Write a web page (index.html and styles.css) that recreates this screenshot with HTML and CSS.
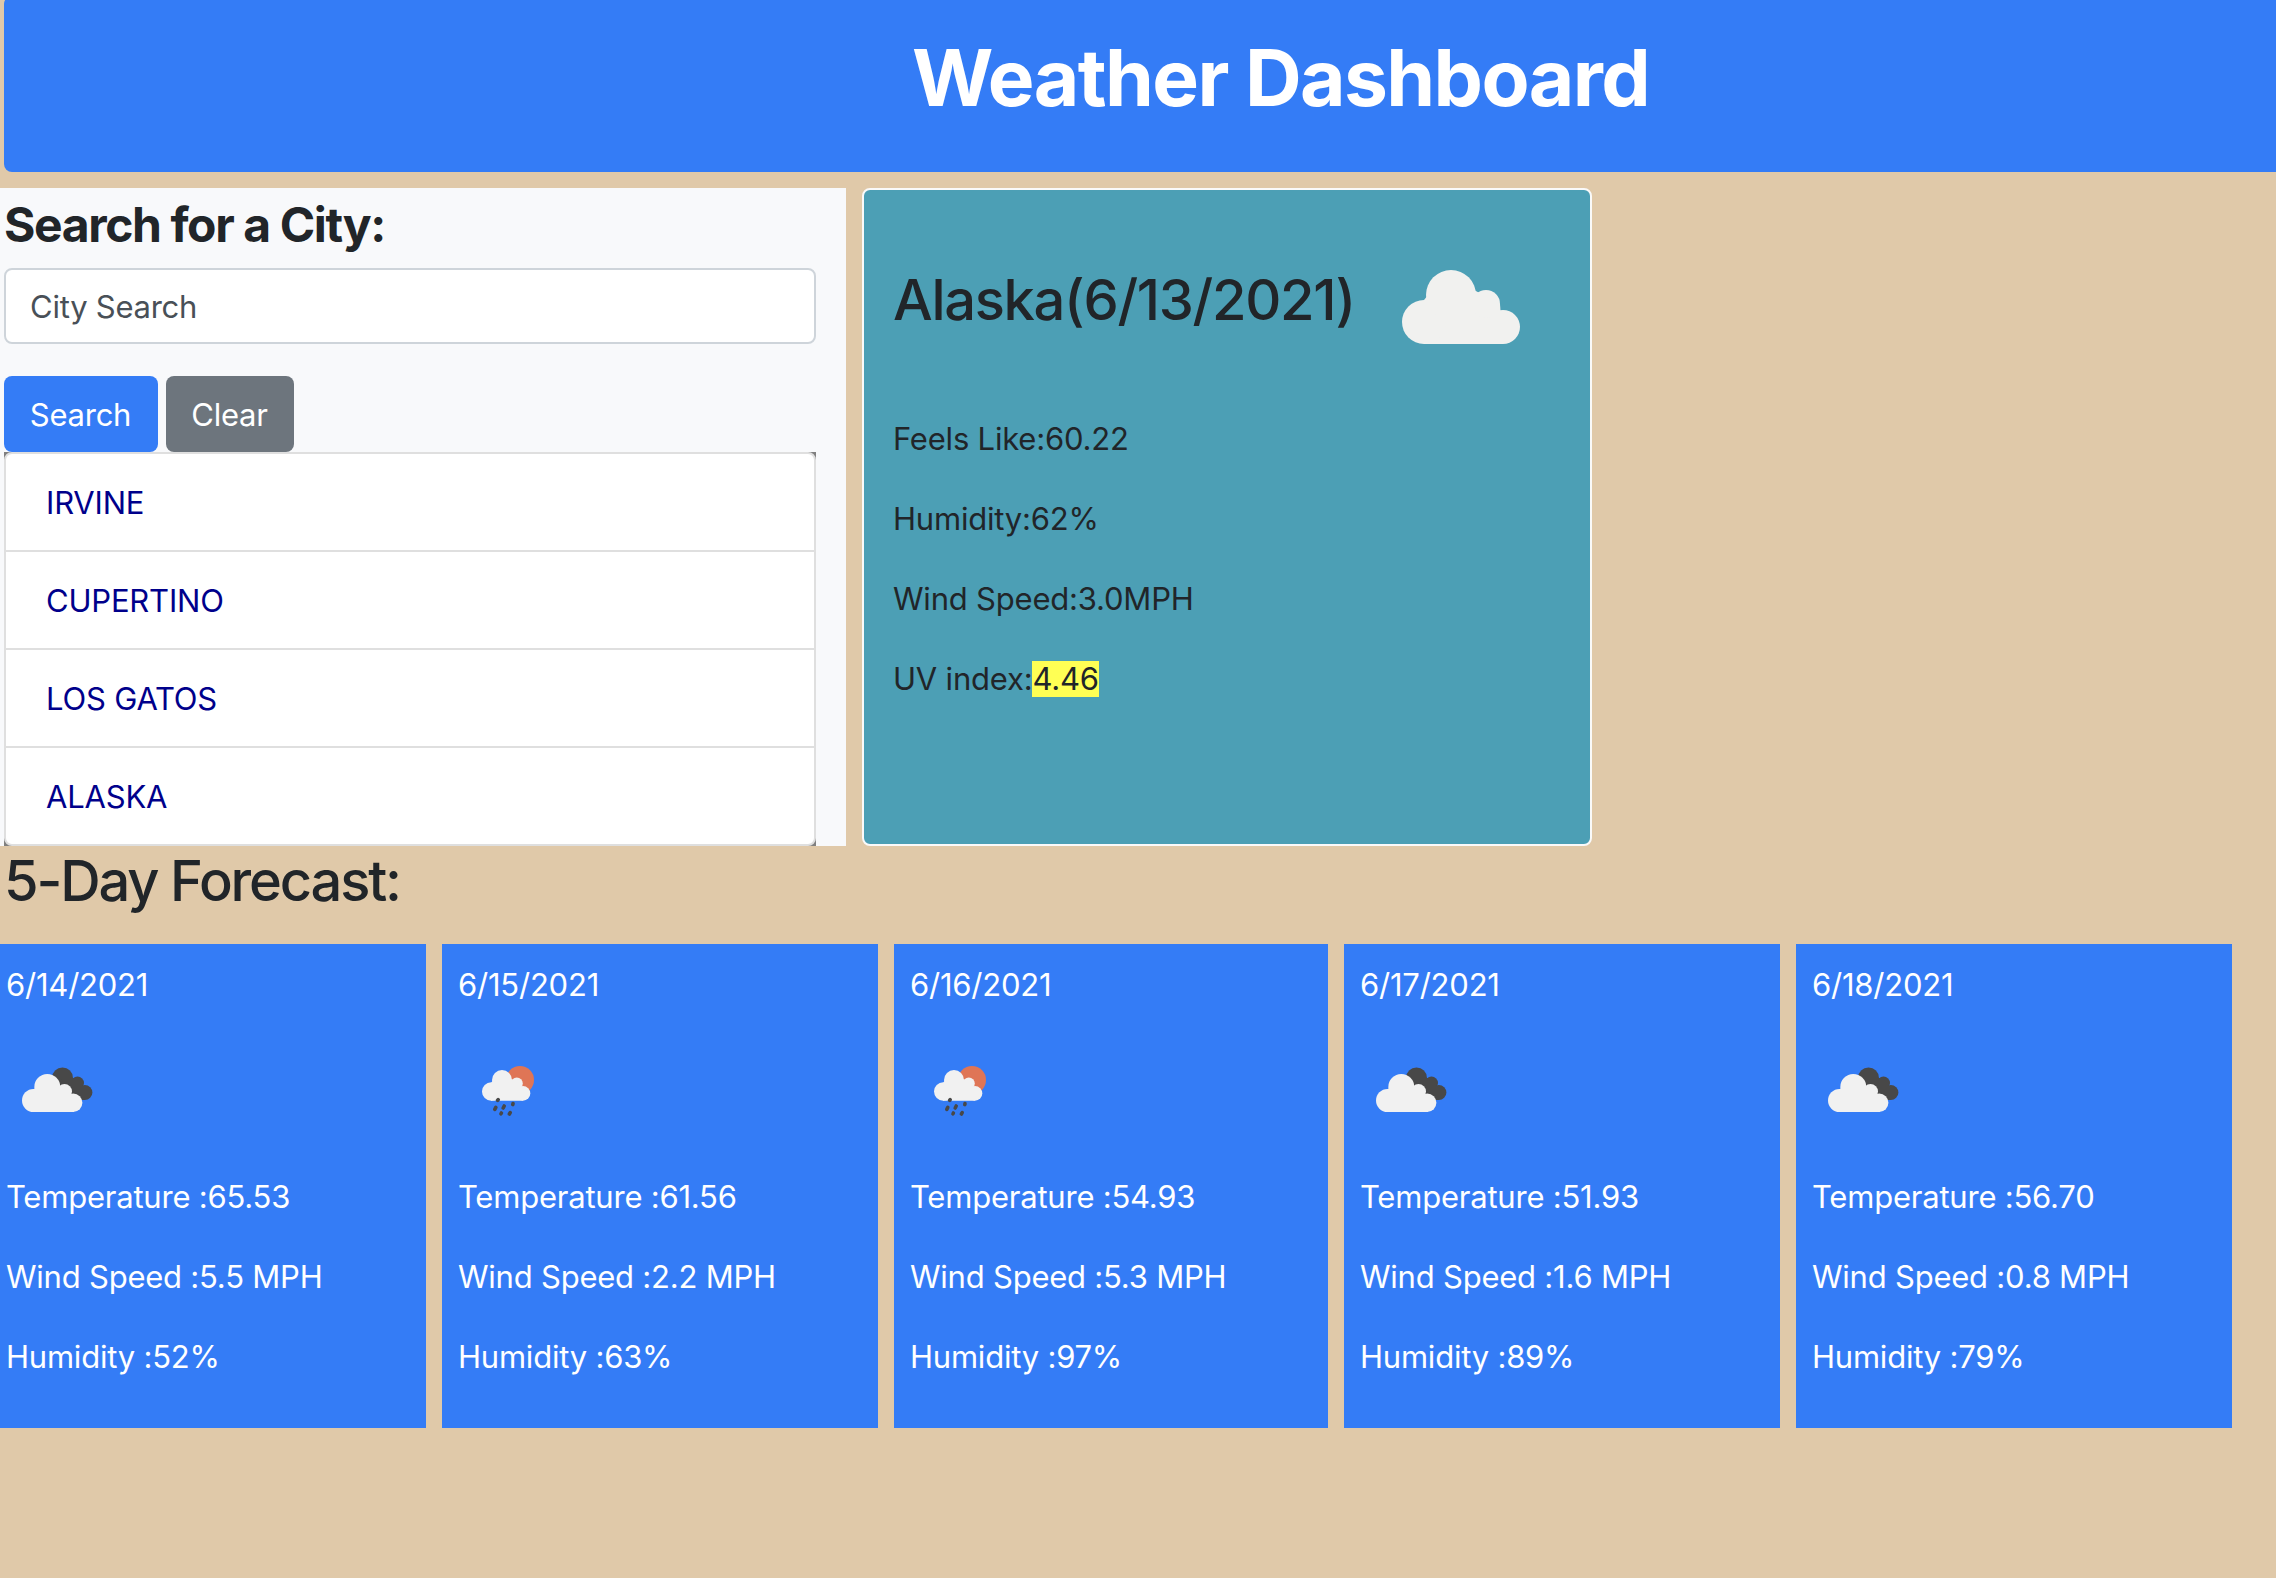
FILE: index.html
```html
<!DOCTYPE html>
<html lang="en">
<head>
<meta charset="utf-8">
<title>Weather Dashboard</title>
<link rel="stylesheet" href="styles.css">
</head>
<body>
<svg class="sprite" aria-hidden="true">
  <symbol id="cloud" viewBox="0 0 118 74">
    <path d="M22 30 L30 20 L72 20 L98 34 L101 74 H22Z"/>
    <circle cx="22" cy="52" r="22"/><circle cx="49" cy="25" r="25"/>
    <circle cx="84" cy="34" r="14"/><circle cx="101" cy="57" r="17"/>
  </symbol>
  <symbol id="broken-clouds" viewBox="0 0 100 100">
    <g fill="#484848"><circle cx="56.5" cy="38" r="10.5"/><circle cx="71.5" cy="43" r="6.5"/><circle cx="78.8" cy="52.5" r="7.6"/><path d="M56 38H72L79 52V60H72L54 48Z"/></g>
    <g fill="#f1f1f1"><circle cx="27.5" cy="60.5" r="11.5"/><circle cx="41.3" cy="47" r="13"/><circle cx="58.5" cy="51.5" r="7.5"/><circle cx="67.2" cy="62.8" r="9.2"/><path d="M27 50L32 46H52L64 52L68 72H27Z"/></g>
  </symbol>
  <symbol id="sun-rain" viewBox="0 0 100 100">
    <circle cx="62" cy="40" r="14" fill="#df7556"/>
    <g fill="#f1f1f1"><circle cx="33.2" cy="51.5" r="9.2"/><circle cx="44" cy="40" r="10"/><circle cx="58.8" cy="43.5" r="6"/><circle cx="65" cy="53.4" r="7.3"/><path d="M33 43L36 39H53L63 45L65 60.7H33Z"/></g>
    <g stroke="#484848" stroke-width="3.6" stroke-linecap="round"><path d="M40.2 59.6L39.6 60.4M37.8 67.4L36.8 69.4M46.2 66L45.2 68M43.4 73L43 73.8M55 63.6L54.8 64.6M52.2 72.6L51.4 74"/></g>
  </symbol>
</svg>
<header class="banner"><h1>Weather Dashboard</h1></header>
<main>
  <div class="top">
    <section class="search">
      <h2>Search for a City:</h2>
      <input class="field" type="text" placeholder="City Search">
      <div class="buttons"><button class="btn primary">Search</button><button class="btn secondary">Clear</button></div>
      <div class="history"><ul>
        <li>IRVINE</li><li>CUPERTINO</li><li>LOS GATOS</li><li>ALASKA</li>
      </ul></div>
    </section>
    <section class="current">
      <div class="place"><h3>Alaska(6/13/2021)</h3><svg class="now"><use href="#cloud"/></svg></div>
      <p>Feels Like:60.22</p>
      <p>Humidity:62%</p>
      <p>Wind Speed:3.0MPH</p>
      <p>UV index:<span class="uv">4.46</span></p>
    </section>
  </div>
  <h3 class="forecast-title">5-Day Forecast:</h3>
  <div class="forecast">
    <article class="day"><p>6/14/2021</p><svg class="icon"><use href="#broken-clouds"/></svg><p>Temperature :65.53</p><p>Wind Speed :5.5 MPH</p><p>Humidity :52%</p></article>
    <article class="day"><p>6/15/2021</p><svg class="icon"><use href="#sun-rain"/></svg><p>Temperature :61.56</p><p>Wind Speed :2.2 MPH</p><p>Humidity :63%</p></article>
    <article class="day"><p>6/16/2021</p><svg class="icon"><use href="#sun-rain"/></svg><p>Temperature :54.93</p><p>Wind Speed :5.3 MPH</p><p>Humidity :97%</p></article>
    <article class="day"><p>6/17/2021</p><svg class="icon"><use href="#broken-clouds"/></svg><p>Temperature :51.93</p><p>Wind Speed :1.6 MPH</p><p>Humidity :89%</p></article>
    <article class="day"><p>6/18/2021</p><svg class="icon"><use href="#broken-clouds"/></svg><p>Temperature :56.70</p><p>Wind Speed :0.8 MPH</p><p>Humidity :79%</p></article>
  </div>
</main>
</body>
</html>
```
FILE: styles.css
```css
* { box-sizing: border-box; }
body {
  margin: 0;
  height: 1578px;
  overflow: hidden;
  background: #e0c9a9;
  color: #212529;
  font: 420 31px/48px Inter, "Liberation Sans", sans-serif;
  letter-spacing: -0.25px;
}
h1, h2, h3, p, ul { margin: 0; padding: 0; }
.sprite { display: none; }
.banner {
  height: 176px;
  margin: -4px 0 16px 4px;
  padding: 34px 0 0 281px;
  border-radius: 8px 0 0 8px;
  background: #347cf6;
  color: #fff;
  text-align: center;
}
.banner h1 { font-size: 78.5px; line-height: 96px; font-weight: 700; letter-spacing: -1.6px; }
.top { display: flex; gap: 16px; height: 658px; }
.search { width: 846px; padding: 8px 30px 0 4px; background: #f8f9fb; }
.search h2 { font-size: 48px; line-height: 58px; font-weight: 700; letter-spacing: -1.4px; margin-bottom: 14px; }
.field {
  display: block;
  width: 812px;
  height: 76px;
  padding: 0 24px;
  border: 2px solid #ced4da;
  border-radius: 8px;
  background: #fff;
  font: inherit;
  letter-spacing: inherit;
}
.field::placeholder { color: #495057; opacity: 1; }
.buttons { display: flex; gap: 8px; margin-top: 32px; }
.btn {
  height: 76px;
  padding: 1px 1px 0 0;
  border: 0;
  border-radius: 8px;
  color: #fff;
  font: inherit;
  letter-spacing: inherit;
}
.primary { width: 154px; background: #347cf6; }
.secondary { width: 128px; background: #6d757d; }
.history { background: #808080; }
.history ul { list-style: none; border: 2px solid #dfdfdf; border-radius: 8px; background: #fff; overflow: hidden; }
.history li { height: 98px; padding: 25px 40px 0; border-bottom: 2px solid #dfdfdf; color: #00008b; letter-spacing: -0.2px; }
.history li:last-child { height: 96px; border-bottom: 0; }
.current {
  width: 730px;
  padding: 40px 29px 0;
  border: 2px solid #fafafa;
  border-radius: 8px;
  background: #4c9fb5;
}
.place { display: flex; height: 200px; gap: 46px; margin-bottom: -15px; }
.place h3 { width: 463px; padding-top: 37px; font-size: 56px; line-height: 67px; font-weight: 540; letter-spacing: -1.3px; white-space: nowrap; }
.now { width: 118px; height: 74px; margin-top: 40px; fill: #f1f1ef; }
.current p { margin-bottom: 32px; letter-spacing: -0.2px; }
.uv { background: #ffff54; display: inline-block; line-height: 36px; }
.forecast-title { height: 98px; padding: 1px 0 0 4px; font-size: 56px; line-height: 68px; font-weight: 540; letter-spacing: -2.15px; }
.forecast {
  display: grid;
  grid-template-columns: 436px 436px 434px 436px 436px;
  gap: 16px;
  margin-left: -10px;
}
.day { height: 484px; padding: 17px 16px 0; background: #347cf6; color: #fff; letter-spacing: -0.22px; }
.day p { margin-bottom: 32px; }
.icon { display: block; width: 100px; height: 100px; margin: -1px 0 33px; }
```
